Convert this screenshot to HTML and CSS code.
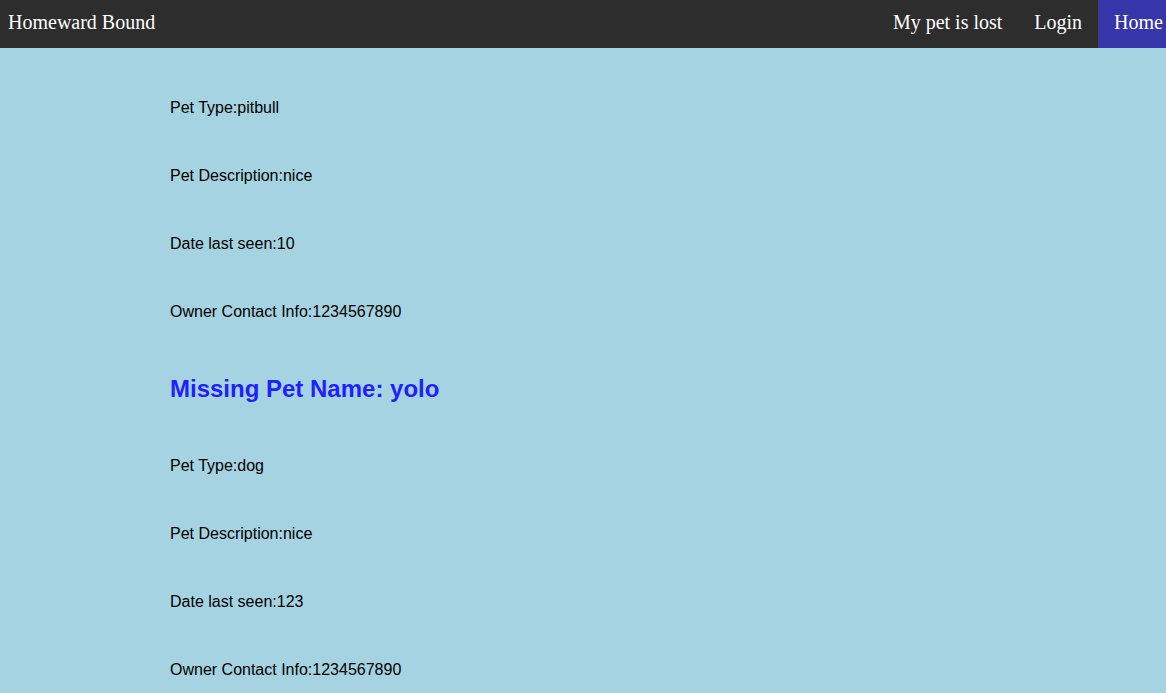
FILE: index.html
```html
<!DOCTYPE html>
<html>
<head>
<meta charset="utf-8">
<title>Homeward Bound</title>
<link rel="stylesheet" href="styles.css">
</head>
<body>
<nav class="topnav">
  <a class="brand" href="#">Homeward Bound</a>
  <div class="nav-links">
    <a class="nav-link" href="#">My pet is lost</a>
    <a class="nav-link" href="#">Login</a>
    <a class="nav-link active" href="#">Home</a>
  </div>
</nav>
<main class="content">
  <p class="field">Pet Type:pitbull</p>
  <p class="field">Pet Description:nice</p>
  <p class="field">Date last seen:10</p>
  <p class="field">Owner Contact Info:1234567890</p>
  <h2 class="pet-name">Missing Pet Name: yolo</h2>
  <p class="field">Pet Type:dog</p>
  <p class="field">Pet Description:nice</p>
  <p class="field">Date last seen:123</p>
  <p class="field">Owner Contact Info:1234567890</p>
</main>
</body>
</html>
```

FILE: styles.css
```css
html {
  overflow-x: hidden;
}
body {
  margin: 0;
  background: #a5d3e1;
  font-family: "Liberation Sans", Arial, sans-serif;
  color: #000;
  overflow-x: hidden;
}
.topnav {
  display: flex;
  align-items: stretch;
  justify-content: space-between;
  height: 48px;
  background: #2d2d2d;
  font-family: "Liberation Serif", "Times New Roman", serif;
  font-size: 20px;
}
.brand {
  color: #fff;
  text-decoration: none;
  padding: 0 8px;
  line-height: 44px;
}
.nav-links {
  display: flex;
  margin-right: -13px;
}
.nav-link {
  color: #fff;
  text-decoration: none;
  padding: 0 16px;
  line-height: 44px;
}
.nav-link.active {
  background: #3636aa;
}
.content {
  display: flex;
  flex-direction: column;
  padding: 26px 0 0 170px;
}
.field {
  margin: 0;
  padding: 25px 0;
  font-size: 16px;
  line-height: 18px;
}
.pet-name {
  margin: 0;
  padding: 29px 0 29px;
  font-size: 24px;
  line-height: 28px;
  font-weight: bold;
  color: #1f1fff;
}
```
